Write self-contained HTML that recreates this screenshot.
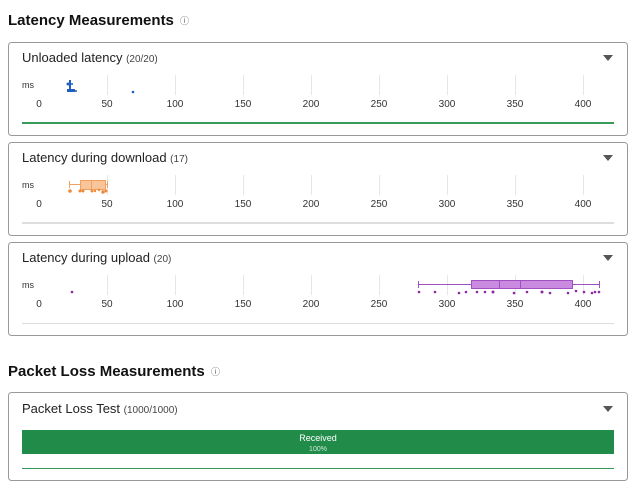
<!DOCTYPE html>
<html><head><meta charset="utf-8"><style>
html,body{margin:0;padding:0;background:#fff;width:636px;height:485px;overflow:hidden}
svg{display:block;font-family:"Liberation Sans",Arial,sans-serif}
</style></head><body>
<svg width="636" height="485" viewBox="0 0 636 485" xmlns="http://www.w3.org/2000/svg">
<text x="8" y="25" font-size="15" font-weight="bold" fill="#111">Latency Measurements</text>
<text x="180" y="24" font-size="9" fill="#555">ⓘ</text>
<text x="8" y="376" font-size="15" font-weight="bold" fill="#111">Packet Loss Measurements</text>
<text x="211" y="375" font-size="9" fill="#555">ⓘ</text>

<g fill="none" stroke="#999" stroke-width="1">
<rect x="8.5" y="42.5" width="619" height="93" rx="3"/>
<rect x="8.5" y="142.5" width="619" height="93" rx="3"/>
<rect x="8.5" y="242.5" width="619" height="93" rx="3"/>
<rect x="8.5" y="392.5" width="619" height="88" rx="3"/>
</g>

<g font-size="13" fill="#222">
<text x="22" y="62">Unloaded latency <tspan font-size="10" fill="#444">(20/20)</tspan></text>
<text x="22" y="162">Latency during download <tspan font-size="10" fill="#444">(17)</tspan></text>
<text x="22" y="262">Latency during upload <tspan font-size="10" fill="#444">(20)</tspan></text>
<text x="22" y="413">Packet Loss Test <tspan font-size="10" fill="#444">(1000/1000)</tspan></text>
</g>
<g fill="#555">
<path d="M603 55h10l-5 6z"/><path d="M603 155h10l-5 6z"/><path d="M603 255h10l-5 6z"/><path d="M603 406h10l-5 6z"/>
</g>

<g id="ax">
<g stroke="#e6e6e6" stroke-width="1">
<path d="M107.5 75v20M175.5 75v20M243.5 75v20M311.5 75v20M379.5 75v20M447.5 75v20M515.5 75v20M583.5 75v20"/>
</g>
<g font-size="10" fill="#333" text-anchor="middle">
<text x="22" y="88" text-anchor="start" font-size="9">ms</text>
<text x="39" y="107">0</text><text x="107" y="107">50</text><text x="175" y="107">100</text><text x="243" y="107">150</text><text x="311" y="107">200</text><text x="379" y="107">250</text><text x="447" y="107">300</text><text x="515" y="107">350</text><text x="583" y="107">400</text>
</g>
</g>
<use href="#ax" y="100"/>
<use href="#ax" y="200"/>

<rect x="22" y="122" width="592" height="2" fill="#3a9a5b"/>
<g fill="#1f5fc0">
<rect x="69" y="80" width="2" height="10"/><rect x="67" y="89" width="8" height="3"/>
<circle cx="68" cy="84" r="1.5"/><circle cx="72" cy="84" r="1"/><circle cx="76" cy="91" r="1"/><circle cx="133" cy="92" r="1.3"/>
</g>

<rect x="22" y="222" width="592" height="2" fill="#ddd"/>
<g stroke="#f0a060" fill="none">
<path d="M69.5 184.5h11M106 184.5h2M69.5 181v7M107.5 181v7"/>
<rect x="80.5" y="180.5" width="25" height="9" fill="#f8c49a"/>
<path d="M91.5 181v8"/>
</g>
<g fill="#ef8a3a">
<circle cx="70" cy="191" r="1.8"/><circle cx="80" cy="191" r="1.5"/><circle cx="83" cy="191" r="1.5"/><circle cx="92" cy="191" r="1.5"/><circle cx="95" cy="191" r="1.2"/><circle cx="99" cy="190" r="1.2"/><circle cx="103" cy="192" r="1.8"/><circle cx="106" cy="191" r="1.5"/>
</g>

<rect x="22" y="323" width="592" height="1" fill="#ddd"/>
<g stroke="#a050c0" fill="none">
<path d="M418.5 284.5h53M572 284.5h27M418.5 281v7M599.5 281v7"/>
<rect x="471.5" y="280.5" width="101" height="8" fill="#c98ae0"/>
<path d="M499.5 281v8M520.5 281v8" />
</g>
<g fill="#8a2aa0">
<circle cx="72" cy="292" r="1.3"/>
<circle cx="419" cy="292" r="1.3"/><circle cx="435" cy="292" r="1.3"/><circle cx="459" cy="293" r="1.3"/><circle cx="466" cy="292" r="1.3"/><circle cx="477" cy="292" r="1.3"/><circle cx="485" cy="292" r="1.3"/><circle cx="493" cy="292" r="1.5"/><circle cx="514" cy="293" r="1.3"/><circle cx="527" cy="292" r="1.3"/><circle cx="542" cy="292" r="1.5"/><circle cx="550" cy="293" r="1.3"/><circle cx="568" cy="293" r="1.3"/><circle cx="576" cy="291" r="1.3"/><circle cx="584" cy="292" r="1.3"/><circle cx="592" cy="293" r="1.3"/><circle cx="595" cy="292" r="1.3"/><circle cx="599" cy="292" r="1.3"/>
</g>

<rect x="22" y="430" width="592" height="24" fill="#218c4a"/>
<text x="318" y="441" font-size="9" fill="#fff" text-anchor="middle">Received</text>
<text x="318" y="451" font-size="7" fill="#cfe8d6" text-anchor="middle">100%</text>
<rect x="22" y="468" width="592" height="1" fill="#3a9a5b"/>
</svg>
</body></html>
